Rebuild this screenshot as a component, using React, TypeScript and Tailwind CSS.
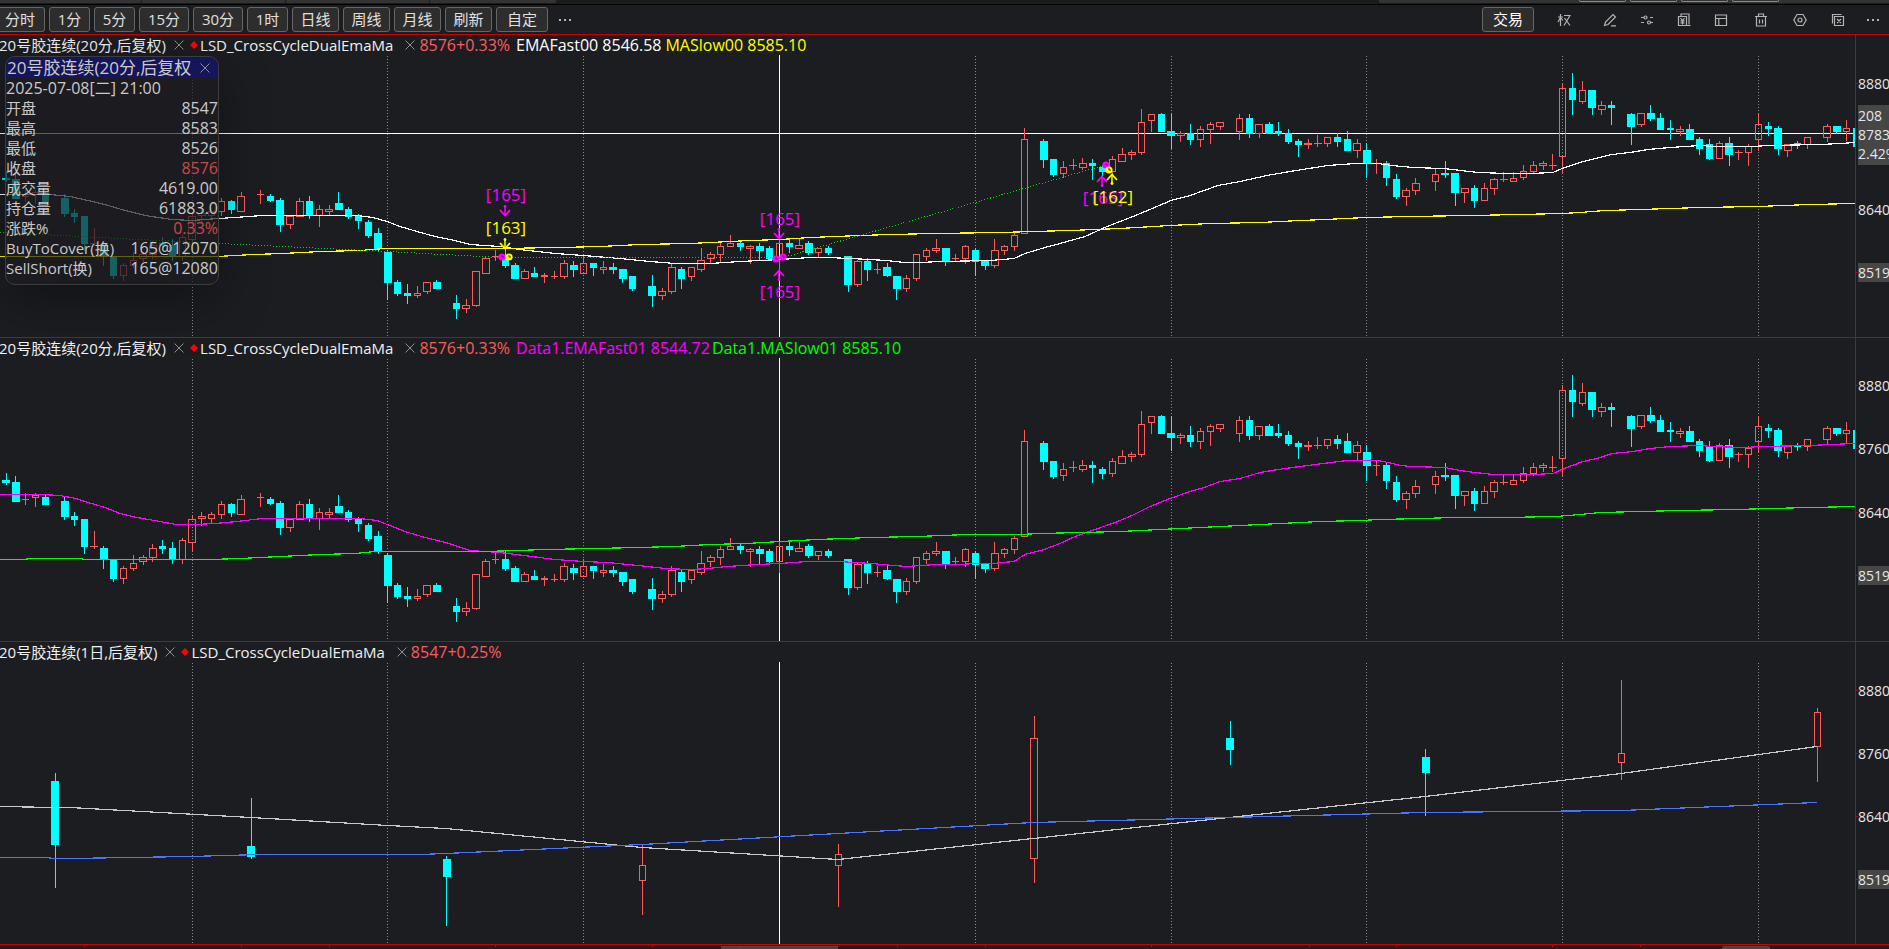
import type { ReactNode } from 'react';

type Candle = [
  index: number,
  kind: 'u' | 'd',
  high: number,
  top: number,
  bottom: number,
  low: number,
];
type Point = [x: number, y: number];

const FONT =
  "font-['Open_Sans','Noto_Sans_CJK_SC',sans-serif]";

const PERIODS = [
  { label: '分时', width: 'w-[45px] rounded-l-none border-l-0 pr-1' },
  { label: '1分', width: 'w-[41px]' },
  { label: '5分', width: 'w-[41px]' },
  { label: '15分', width: 'w-[50px]' },
  { label: '30分', width: 'w-[50px]' },
  { label: '1时', width: 'w-[41px]' },
  { label: '日线', width: 'w-[47px]' },
  { label: '周线', width: 'w-[47px]' },
  { label: '月线', width: 'w-[47px]' },
  { label: '刷新', width: 'w-[47px]' },
  { label: '自定', width: 'w-[52px]' },
];

const QUOTE_ROWS = [
  { label: '开盘', value: '8547' },
  { label: '最高', value: '8583' },
  { label: '最低', value: '8526' },
  { label: '收盘', value: '8576', up: true },
  { label: '成交量', value: '4619.00' },
  { label: '持仓量', value: '61883.0' },
  { label: '涨跌%', value: '0.33%', up: true },
  { label: 'BuyToCover(换)', value: '165@12070' },
  { label: 'SellShort(换)', value: '165@12080' },
];

// 20 minute bars, heights in plot units
const MINUTE_BARS: Candle[] = [
  [0, 'd', 115, 122, 125, 127],
  [1, 'd', 118, 124, 144, 144],
  [2, 'u', 135, 141, 142, 147],
  [3, 'u', 135, 137, 140, 149],
  [4, 'd', 137, 139, 147, 147],
  [6, 'd', 139, 143, 159, 162],
  [7, 'd', 154, 158, 162, 168],
  [8, 'd', 161, 161, 189, 196],
  [9, 'u', 173, 188, 189, 191],
  [10, 'd', 188, 190, 201, 211],
  [11, 'd', 202, 202, 221, 224],
  [12, 'u', 208, 210, 221, 226],
  [13, 'u', 197, 205, 211, 213],
  [14, 'u', 197, 199, 204, 207],
  [15, 'u', 186, 190, 200, 204],
  [16, 'd', 182, 188, 191, 196],
  [17, 'd', 184, 190, 202, 206],
  [18, 'u', 180, 182, 202, 206],
  [19, 'u', 158, 161, 185, 194],
  [20, 'u', 154, 158, 161, 168],
  [21, 'u', 154, 156, 161, 165],
  [22, 'u', 143, 146, 157, 161],
  [23, 'd', 145, 146, 155, 159],
  [24, 'u', 137, 141, 157, 157],
  [26, 'u', 135, 139, 140, 149],
  [27, 'd', 139, 141, 146, 147],
  [28, 'd', 143, 145, 170, 177],
  [29, 'u', 161, 161, 170, 174],
  [30, 'u', 143, 146, 162, 162],
  [31, 'd', 141, 146, 160, 164],
  [32, 'u', 150, 154, 161, 172],
  [33, 'u', 150, 154, 157, 161],
  [34, 'd', 137, 148, 155, 155],
  [35, 'd', 152, 154, 162, 164],
  [36, 'd', 159, 161, 166, 174],
  [37, 'd', 165, 167, 181, 183],
  [38, 'd', 173, 178, 194, 196],
  [39, 'd', 195, 197, 228, 245],
  [40, 'd', 225, 227, 239, 241],
  [41, 'd', 229, 238, 241, 249],
  [42, 'u', 231, 238, 241, 243],
  [43, 'u', 227, 227, 237, 239],
  [44, 'd', 225, 227, 234, 234],
  [46, 'd', 240, 248, 254, 264],
  [47, 'u', 244, 250, 254, 258],
  [48, 'u', 216, 216, 251, 252],
  [49, 'u', 201, 203, 219, 219],
  [50, 'u', 195, 201, 202, 206],
  [51, 'd', 193, 201, 211, 213],
  [52, 'd', 208, 210, 224, 224],
  [53, 'u', 214, 216, 224, 224],
  [54, 'd', 212, 218, 222, 222],
  [55, 'u', 218, 220, 222, 228],
  [56, 'u', 216, 221, 222, 224],
  [57, 'u', 205, 208, 222, 224],
  [58, 'd', 206, 210, 215, 222],
  [59, 'u', 201, 208, 219, 219],
  [60, 'd', 208, 208, 213, 221],
  [61, 'u', 206, 212, 215, 219],
  [62, 'd', 208, 212, 215, 219],
  [63, 'd', 214, 214, 224, 228],
  [64, 'd', 221, 221, 234, 236],
  [66, 'd', 220, 231, 241, 252],
  [67, 'u', 233, 236, 241, 245],
  [68, 'u', 208, 212, 237, 239],
  [69, 'd', 212, 214, 224, 234],
  [70, 'u', 212, 212, 222, 226],
  [71, 'u', 193, 205, 215, 217],
  [72, 'u', 197, 199, 204, 209],
  [73, 'u', 188, 191, 200, 207],
  [74, 'u', 180, 188, 192, 192],
  [75, 'd', 186, 188, 192, 196],
  [76, 'u', 190, 191, 194, 209],
  [77, 'd', 188, 191, 196, 206],
  [78, 'd', 191, 193, 204, 206],
  [79, 'u', 184, 188, 204, 215],
  [80, 'd', 183, 188, 192, 198],
  [81, 'u', 184, 190, 194, 194],
  [82, 'd', 186, 188, 198, 200],
  [83, 'u', 193, 193, 198, 202],
  [84, 'd', 191, 193, 198, 200],
  [86, 'd', 201, 201, 230, 237],
  [87, 'u', 205, 206, 230, 232],
  [88, 'd', 203, 206, 215, 226],
  [89, 'u', 208, 214, 215, 219],
  [90, 'd', 208, 212, 221, 222],
  [91, 'd', 221, 221, 234, 245],
  [92, 'u', 220, 223, 234, 237],
  [93, 'u', 199, 199, 224, 226],
  [94, 'u', 193, 195, 202, 206],
  [95, 'u', 184, 193, 196, 198],
  [96, 'd', 193, 193, 206, 211],
  [97, 'u', 199, 203, 204, 206],
  [98, 'u', 190, 191, 204, 209],
  [99, 'd', 193, 195, 207, 221],
  [100, 'd', 205, 206, 211, 215],
  [101, 'u', 184, 195, 211, 213],
  [102, 'u', 190, 191, 196, 200],
  [103, 'u', 178, 180, 192, 196],
  [104, 'u', 72, 83, 179, 179],
  [106, 'd', 83, 85, 104, 112],
  [107, 'd', 103, 103, 119, 121],
  [108, 'u', 105, 111, 118, 123],
  [109, 'u', 103, 109, 110, 114],
  [110, 'u', 102, 107, 112, 114],
  [111, 'd', 103, 107, 110, 125],
  [112, 'd', 109, 111, 116, 121],
  [113, 'u', 100, 103, 116, 119],
  [114, 'u', 92, 98, 106, 106],
  [115, 'u', 94, 96, 99, 104],
  [116, 'u', 53, 66, 97, 99],
  [117, 'u', 58, 58, 65, 76],
  [118, 'd', 57, 58, 76, 76],
  [119, 'd', 58, 75, 80, 93],
  [120, 'u', 75, 77, 80, 86],
  [121, 'd', 68, 77, 84, 89],
  [122, 'u', 70, 73, 84, 91],
  [123, 'u', 66, 68, 74, 88],
  [124, 'u', 66, 66, 71, 74],
  [126, 'u', 58, 62, 76, 84],
  [127, 'd', 58, 62, 78, 82],
  [128, 'u', 68, 68, 78, 82],
  [129, 'd', 66, 68, 78, 78],
  [130, 'd', 66, 75, 78, 80],
  [131, 'd', 73, 77, 86, 88],
  [132, 'd', 83, 85, 89, 101],
  [133, 'u', 83, 87, 89, 93],
  [134, 'u', 79, 87, 88, 91],
  [135, 'u', 81, 81, 88, 91],
  [136, 'd', 77, 81, 86, 91],
  [137, 'd', 75, 83, 95, 95],
  [138, 'u', 83, 87, 95, 102],
  [139, 'd', 87, 94, 108, 123],
  [140, 'u', 103, 107, 108, 118],
  [141, 'd', 105, 107, 123, 131],
  [142, 'd', 118, 124, 142, 144],
  [143, 'u', 133, 135, 142, 151],
  [144, 'u', 122, 128, 136, 140],
  [146, 'u', 113, 118, 127, 136],
  [147, 'd', 105, 117, 119, 123],
  [148, 'd', 117, 117, 138, 151],
  [149, 'u', 133, 133, 138, 148],
  [150, 'd', 130, 133, 146, 153],
  [151, 'u', 128, 133, 146, 146],
  [152, 'u', 122, 124, 134, 140],
  [153, 'u', 116, 124, 125, 127],
  [154, 'u', 116, 122, 127, 127],
  [155, 'u', 109, 115, 123, 125],
  [156, 'u', 105, 109, 116, 118],
  [157, 'u', 105, 107, 110, 114],
  [158, 'u', 98, 109, 110, 114],
  [159, 'u', 27, 32, 101, 118],
  [160, 'd', 17, 32, 44, 59],
  [161, 'u', 25, 34, 46, 48],
  [162, 'd', 34, 34, 52, 59],
  [163, 'u', 45, 49, 54, 59],
  [164, 'd', 45, 49, 52, 69],
  [166, 'd', 57, 58, 71, 89],
  [167, 'u', 57, 57, 69, 71],
  [168, 'd', 49, 57, 63, 65],
  [169, 'd', 57, 62, 74, 74],
  [170, 'd', 64, 72, 74, 84],
  [171, 'u', 70, 73, 76, 80],
  [172, 'd', 68, 73, 84, 84],
  [173, 'd', 81, 83, 93, 99],
  [174, 'd', 83, 88, 103, 104],
  [175, 'u', 85, 87, 103, 103],
  [176, 'd', 81, 87, 99, 110],
  [177, 'u', 94, 96, 97, 104],
  [178, 'u', 88, 90, 97, 110],
  [179, 'u', 58, 68, 84, 95],
  [180, 'd', 66, 70, 73, 80],
  [181, 'd', 70, 72, 93, 99],
  [182, 'u', 88, 88, 95, 101],
  [183, 'd', 85, 87, 89, 93],
  [184, 'u', 81, 81, 89, 93],
  [186, 'u', 68, 70, 82, 86],
  [187, 'd', 70, 70, 76, 78],
  [188, 'u', 64, 72, 76, 85],
  [189, 'd', 72, 72, 91, 91],
];

const DAY_BARS: Candle[] = [
  [0, 'd', 111, 119, 183, 226],
  [1, 'd', 136, 184, 195, 197],
  [2, 'd', 194, 197, 215, 264],
  [3, 'u', 182, 203, 219, 253],
  [4, 'u', 182, 192, 204, 245],
  [5, 'u', 54, 76, 197, 221],
  [6, 'd', 59, 76, 88, 103],
  [7, 'd', 87, 95, 111, 154],
  [8, 'u', 18, 91, 101, 118],
  [9, 'u', 46, 50, 85, 120],
];

const EMA_00: Point[] = [
  [0, 139], [50, 139], [70, 141], [88, 145], [105, 149], [125, 155],
  [145, 160], [172, 164], [192, 165], [218, 163], [235, 162], [262, 160],
  [310, 160], [357, 160], [373, 162], [387, 166], [400, 171], [417, 176],
  [435, 181], [455, 185], [470, 189], [500, 191], [520, 194], [555, 198],
  [583, 200], [620, 203], [650, 206], [675, 208], [710, 208], [740, 206],
  [780, 204], [810, 202], [828, 202], [850, 203], [870, 204], [886, 205],
  [905, 207], [920, 207], [940, 206], [990, 205], [1014, 203], [1025, 198],
  [1045, 192], [1060, 188], [1085, 181], [1107, 171], [1133, 161], [1157, 151],
  [1171, 145], [1190, 140], [1218, 130], [1240, 126], [1267, 120], [1290, 116],
  [1328, 110], [1356, 108], [1378, 108], [1392, 110], [1413, 112], [1443, 113],
  [1461, 115], [1478, 117], [1507, 118], [1530, 118], [1553, 117], [1562, 113],
  [1580, 107], [1599, 102], [1612, 99], [1630, 97], [1648, 94], [1670, 92],
  [1700, 90], [1715, 91], [1750, 91], [1770, 90], [1820, 89], [1840, 88],
  [1855, 87],
];

const SLOW_00: Point[] = [
  [0, 201], [217, 201], [253, 199], [283, 198], [320, 196], [360, 195],
  [385, 193], [500, 193], [560, 192], [600, 191], [640, 189], [690, 188],
  [750, 185], [780, 184], [810, 182], [860, 180], [890, 179], [935, 178],
  [1000, 177], [1033, 176], [1070, 175], [1120, 173], [1170, 170], [1210, 168],
  [1260, 167], [1300, 165], [1325, 164], [1366, 162], [1410, 161], [1470, 160],
  [1520, 159], [1562, 158], [1580, 157], [1605, 155], [1640, 154], [1700, 152],
  [1758, 151], [1810, 149], [1855, 148],
];

const EMA_01: Point[] = [
  [0, 136], [42, 136], [60, 137], [76, 140], [88, 144], [105, 149],
  [120, 155], [137, 159], [160, 163], [176, 166], [196, 166], [215, 165],
  [237, 163], [262, 160], [310, 160], [360, 160], [377, 162], [390, 167],
  [405, 173], [425, 179], [446, 184], [458, 188], [470, 192], [500, 194],
  [524, 197], [555, 201], [583, 203], [608, 204], [638, 207], [665, 210],
  [690, 211], [708, 210], [727, 208], [757, 206], [779, 205], [808, 203],
  [838, 203], [855, 204], [872, 205], [893, 207], [907, 208], [921, 207],
  [936, 206], [960, 206], [975, 205], [994, 205], [1003, 204], [1014, 203],
  [1025, 196], [1044, 191], [1060, 185], [1075, 178], [1095, 171], [1115, 164],
  [1132, 157], [1150, 148], [1170, 140], [1190, 133], [1204, 129], [1220, 123],
  [1240, 120], [1260, 114], [1278, 111], [1300, 108], [1323, 105], [1347, 102],
  [1378, 102], [1388, 104], [1400, 107], [1412, 108], [1445, 109], [1460, 112],
  [1475, 114], [1493, 116], [1533, 116], [1553, 115], [1562, 111], [1572, 107],
  [1583, 103], [1597, 100], [1612, 95], [1633, 93], [1650, 90], [1670, 88],
  [1700, 87], [1712, 88], [1745, 89], [1760, 88], [1810, 87], [1830, 86],
  [1855, 85],
];

const SLOW_01: Point[] = [
  [0, 201], [24, 201], [30, 200], [80, 200], [84, 201], [210, 201],
  [240, 200], [280, 198], [320, 196], [355, 195], [375, 193], [485, 193],
  [517, 192], [545, 191], [596, 190], [638, 189], [674, 188], [710, 186],
  [746, 185], [781, 183], [817, 181], [871, 179], [917, 178], [967, 176],
  [1020, 176], [1040, 175], [1080, 174], [1120, 173], [1160, 171], [1200, 169],
  [1240, 167], [1280, 165], [1320, 163], [1360, 162], [1380, 161], [1420, 160],
  [1455, 159], [1505, 159], [1556, 158], [1580, 156], [1600, 154], [1640, 153],
  [1680, 152], [1735, 151], [1770, 150], [1810, 149], [1855, 148],
];

const DAY_FAST: Point[] = [
  [0, 144], [55, 145], [70, 145], [251, 155], [388, 163], [446, 166],
  [642, 185], [838, 197], [1033, 176], [1229, 155], [1425, 134], [1621, 111],
  [1817, 84],
];

const DAY_SLOW: Point[] = [
  [0, 195], [45, 195], [55, 196], [70, 196], [130, 195], [190, 194],
  [260, 192], [420, 192], [446, 191], [642, 182], [838, 171], [1033, 160],
  [1229, 155], [1425, 150], [1621, 148], [1817, 140],
];

const GRID_X = [192, 387, 583, 779, 975, 1171, 1366, 1562, 1758];
const CROSS_X = 779;

const toPoints = (points: Point[]) =>
  points.map(([x, y]) => `${x},${y}`).join(' ');

// the first pane shares its bars with the second, on a slightly tighter scale
const tighten = (bars: Candle[]): Candle[] =>
  bars.map(([index, kind, ...levels]) => {
    const [high, top, bottom, low] = levels.map((y) =>
      Math.round(28.3 + ((y - 27.3) * 189) / 190)
    );
    return [index, kind, high, top, Math.max(bottom, top + 1), low];
  });

const Candles = ({
  bars,
  start,
  step,
}: {
  bars: Candle[];
  start: number;
  step: number;
}) => (
  <g shapeRendering="crispEdges">
    {bars.map(([index, kind, high, top, bottom, low]) => {
      const center = start + index * step;
      const x = Math.floor(center);
      const left = Math.floor(center - 3.25);
      const width = Math.floor(center + 4.2) - left;
      const height = bottom - top;

      if (kind === 'd') {
        return (
          <g key={index} fill="#00ffff">
            <rect x={x} y={high} width={1} height={low - high} />
            <rect x={left} y={top} width={width} height={height} />
          </g>
        );
      }

      return (
        <g key={index} fill="#ff5b5b">
          <rect x={x} y={high} width={1} height={top - high} />
          <rect x={x} y={bottom} width={1} height={Math.max(low - bottom, 0)} />
          {height <= 2 ? (
            <rect x={left} y={top} width={width} height={height} />
          ) : (
            <rect
              x={left + 0.5}
              y={top + 0.5}
              width={width - 1}
              height={height - 1}
              fill="none"
              stroke="#ff5b5b"
            />
          )}
        </g>
      );
    })}
  </g>
);

const Line = ({ points, color }: { points: Point[]; color: string }) => (
  <polyline
    points={toPoints(points)}
    transform="translate(0 0.5)"
    fill="none"
    stroke={color}
    strokeWidth={1.2}
    shapeRendering="crispEdges"
  />
);

const Plot = ({
  height,
  label,
  children,
}: {
  height: number;
  label: string;
  children: ReactNode;
}) => (
  <svg
    role="img"
    aria-label={label}
    className="block w-full"
    height={height}
  >
    <g shapeRendering="crispEdges">
      {GRID_X.filter((x) => x !== CROSS_X).map((x) => (
        <line
          key={x}
          x1={x + 0.5}
          x2={x + 0.5}
          y1={1}
          y2={height}
          stroke="#8c8c8c"
          strokeDasharray="1 2"
        />
      ))}
      <rect x={CROSS_X} y={0} width={1} height={height} fill="#ffffff" />
    </g>
    {children}
  </svg>
);

const Arrow = ({
  x,
  y,
  color,
  down = false,
}: {
  x: number;
  y: number;
  color: string;
  down?: boolean;
}) => (
  <g
    transform={`translate(${x} ${y}) scale(1 ${down ? -1 : 1})`}
    stroke={color}
    fill="none"
  >
    <path d="M0 -4V5" strokeWidth={1.5} />
    <path d="M-5 1L0 -4.5L5 1" strokeWidth={1.8} />
    <circle cy={4.5} r={1} fill={color} />
  </g>
);

const Dot = ({ x, y, color }: { x: number; y: number; color: string }) => (
  <g>
    <circle cx={x} cy={y} r={3.6} fill={color} />
    <path d={`M${x - 1} ${y - 1}h2v2`} stroke="#3d3d3d" fill="none" />
  </g>
);

const Mark = ({
  x,
  y,
  color,
  children,
}: {
  x: number;
  y: number;
  color: string;
  children: string;
}) => (
  <text x={x} y={y} fill={color} textAnchor="middle" className="text-[17px]">
    {children}
  </text>
);

const PriceAxis = ({
  height,
  ticks,
  children,
}: {
  height: number;
  ticks: { y: number; label: string; boxed?: boolean }[];
  children?: ReactNode;
}) => (
  <svg
    width={33}
    height={height}
    className="block text-[14px]"
    role="img"
    aria-label="价格轴"
  >
    {ticks.map((tick) => (
      <g key={tick.y}>
        {tick.boxed && (
          <rect x={2} y={tick.y - 9} width={31} height={19} fill="#464646" />
        )}
        <rect x={0} y={tick.y} width={2} height={1} fill="#c80000" />
        <text x={2} y={tick.y + 6} fill="#e6e6e6">
          {tick.label}
        </text>
      </g>
    ))}
    {children}
  </svg>
);

const CloseMark = ({ label }: { label: string }) => (
  <button type="button" aria-label={label} className="block">
    <svg width="10" height="10" viewBox="0 0 10 10" stroke="#8f8f8f">
      <path d="M0.5 0.5L9.5 9.5M9.5 0.5L0.5 9.5" />
    </svg>
  </button>
);

const PaneHeader = ({
  title,
  change,
  children,
}: {
  title: string;
  change: string;
  children?: ReactNode;
}) => (
  <header className="flex h-5 items-center overflow-hidden whitespace-nowrap text-[16px] leading-5 text-[#f0f0f0]">
    <h2 className="-ml-px text-[15px]">{title}</h2>
    <div className="ml-2 flex items-center gap-1.5">
      <CloseMark label="关闭合约" />
      <svg width="8" height="8" viewBox="0 0 8 8" fill="#ff0000">
        <path d="M4 0L8 4L4 8L0 4Z" />
      </svg>
    </div>
    <span className="ml-0.5 mr-3 text-[15px]">LSD_CrossCycleDualEmaMa</span>
    <CloseMark label="关闭策略" />
    <span className="ml-1 text-[#ff5b5b]">{change}</span>
    {children}
  </header>
);

const QuotePanel = () => (
  <aside className="absolute left-[5px] top-[21px] w-[214px] overflow-hidden rounded-[10px] border border-[#3c3d41] bg-[#1c1d21]/70 pb-1.5 text-[15px] text-[#cacaca] shadow-[0_16px_50px_rgba(0,0,0,0.35)]">
    <div className="flex h-[21px] items-center justify-between bg-[#15155a] pl-px pr-2">
      <h3 className="w-[187px] overflow-hidden whitespace-nowrap text-[17px] leading-[21px]">
        20号胶连续(20分,后复权
      </h3>
      <CloseMark label="关闭窗口" />
    </div>
    <table className="w-full">
      <caption className="h-5 text-left text-[16px] leading-5">
        2025-07-08[二] 21:00
      </caption>
      <tbody>
        {QUOTE_ROWS.map((row) => (
          <tr key={row.label} className="h-5 leading-5">
            <th scope="row" className="p-0 text-left font-normal">
              {row.label}
            </th>
            <td
              className={
                row.up
                  ? 'p-0 text-right text-[16px] leading-5 text-[#c94a4a]'
                  : 'p-0 text-right text-[16px] leading-5'
              }
            >
              {row.value}
            </td>
          </tr>
        ))}
      </tbody>
    </table>
  </aside>
);

const ToolIcon = ({ children }: { children: ReactNode }) => (
  <svg
    width="14"
    height="14"
    viewBox="0 0 14 14"
    fill="none"
    stroke="#b4b4b4"
    strokeWidth="1.2"
  >
    {children}
  </svg>
);

const MORE_DOTS = (
  <g fill="#b4b4b4" stroke="none">
    <rect x="1" y="6" width="2" height="2" />
    <rect x="6" y="6" width="2" height="2" />
    <rect x="11" y="6" width="2" height="2" />
  </g>
);

const TOOLS = [
  {
    label: '复权',
    width: 'w-[55px]',
    icon: (
      <path d="M3.5 1v12M1 4h5M3.5 4.5L1 9M4 5l2 2.5M7 2.5h6L7 12.5M7.5 5l5.5 7.5" />
    ),
  },
  {
    label: '画线',
    width: 'w-[37px]',
    icon: <path d="M1.5 12.5L2.5 9L10 1.5L12.5 4L5 11.5ZM8 12.8h5" />,
  },
  {
    label: '参数',
    width: 'w-[37px]',
    icon: (
      <>
        <path d="M1 4.5h6M10 4.5h3M1 9.5h3M7 9.5h6" transform="scale(1 1)" />
        <circle cx="5.5" cy="4.5" r="1.5" fill="#1c1d21" />
        <circle cx="9" cy="9.5" r="1.5" fill="#1c1d21" />
      </>
    ),
  },
  {
    label: '账户',
    width: 'w-[37px]',
    icon: (
      <path d="M1.5 3.5h8v9h-8zM4 3.5v-2.5h8v10.5M9.5 12.5h4M3.5 5l2 2.5l2 -2.5M5.5 7.5v4M3.5 7.8h4M3.5 9.8h4" />
    ),
  },
  {
    label: '布局',
    width: 'w-[37px]',
    icon: <path d="M1.5 2h11v10.5h-11zM1.5 5.5h11M4.8 5.5v7" />,
  },
  {
    label: '删除',
    width: 'w-[43px]',
    icon: (
      <path d="M1 3.5h12M4.5 3.5v-2.5h5v2.5M2.5 3.5v9.5h9v-9.5M5.5 6.5v4M8.5 6.5v4" />
    ),
  },
  {
    label: '设置',
    width: 'w-9',
    icon: (
      <>
        <path d="M4 1.5h6L13.2 7L10 12.5H4L0.8 7Z" />
        <circle cx="7" cy="7" r="2" />
      </>
    ),
  },
  {
    label: '关闭全部',
    width: 'w-[39px]',
    icon: <path d="M3.5 3.5h9v9h-9zM1.5 10.5v-9h9M6 6l4 4M10 6l-4 4" />,
  },
  { label: '更多', width: 'w-8', icon: MORE_DOTS },
];

const Toolbar = () => (
  <nav className="flex h-[30px] items-center border-t border-black text-[15px] text-[#e0e0e0]">
    <div className="flex gap-1">
      {PERIODS.map((period) => (
        <button
          key={period.label}
          type="button"
          className={`h-[25px] whitespace-nowrap rounded-[3px] border border-[#666666] bg-[#2d2d2d] leading-[23px] ${period.width}`}
        >
          {period.label}
        </button>
      ))}
    </div>
    <button type="button" aria-label="更多周期" className="ml-2.5 block">
      <ToolIcon>{MORE_DOTS}</ToolIcon>
    </button>
    <div className="ml-auto flex items-center">
      <button
        type="button"
        className="mr-0.5 h-[25px] w-[52px] rounded-[3px] border border-[#666666] bg-[#2d2d2d] leading-[23px] text-white"
      >
        交易
      </button>
      {TOOLS.map((tool) => (
        <button
          key={tool.label}
          type="button"
          aria-label={tool.label}
          className={`flex h-6 items-center justify-center ${tool.width}`}
        >
          <ToolIcon>{tool.icon}</ToolIcon>
        </button>
      ))}
    </div>
  </nav>
);

const Pane = ({ axis, children }: { axis: ReactNode; children: ReactNode }) => (
  <section className="relative flex border-t border-[#c80000]">
    <div className="min-w-0 flex-1">{children}</div>
    <div className="border-l border-[#c80000]">{axis}</div>
  </section>
);

const TAB_EDGE =
  'h-0.5 w-[47px] rounded-b-sm border border-t-0 border-[#8a8a8a]';

const TIME_TICKS = [
  84, 241, 329, 495, 652, 740, 897, 985, 1151, 1309, 1396, 1552, 1640,
];

const App = () => (
  <div
    className={`min-h-screen overflow-hidden bg-[#1c1d21] text-[#e6e6e6] ${FONT}`}
  >
    <div className="flex h-1 justify-between bg-[#1b1b1b]">
      <div className="flex h-[3px] bg-[#333333]">
        <div className="w-[142px] border-r border-[#1b1b1b]" />
        <div className="w-36 border-r border-[#1b1b1b]" />
        <div className="w-36 border-r border-[#1b1b1b]" />
        <div className="w-[126px]" />
      </div>
      <div className="flex h-[3px] gap-1 bg-[#333333] pl-50 pr-[110px]">
        <div className={TAB_EDGE} />
        <div className={TAB_EDGE} />
        <div className={TAB_EDGE} />
        <div className={TAB_EDGE} />
      </div>
    </div>
    <Toolbar />

    <main>
      <Pane
        axis={
          <PriceAxis
            height={302}
            ticks={[
              { y: 48, label: '8880' },
              { y: 174, label: '8640' },
              { y: 237, label: '8519', boxed: true },
            ]}
          >
            <rect x={2} y={70} width={31} height={60} fill="#464646" />
            <g fill="#e6e6e6">
              <text x={2} y={86}>
                208
              </text>
              <text x={2} y={105}>
                8783
              </text>
              <text x={2} y={124}>
                2.42%
              </text>
            </g>
          </PriceAxis>
        }
      >
        <PaneHeader title="20号胶连续(20分,后复权)" change="8576+0.33%">
          <span className="ml-1.5 text-white">EMAFast00 8546.58</span>
          <span className="ml-1 text-[#ffff00]">MASlow00 8585.10</span>
        </PaneHeader>
        <Plot height={282} label="20分钟K线">
          <rect
            x={0}
            y={78}
            width="100%"
            height={1}
            fill="#ffffff"
            shapeRendering="crispEdges"
          />
          <Candles bars={tighten(MINUTE_BARS)} start={6.1} step={9.79} />
          <Line points={EMA_00} color="#ffffff" />
          <Line points={SLOW_00} color="#ffff00" />
          <polyline
            points="0,177 218,188 387,196 500,202 783,202 1104,110"
            transform="translate(0 0.5)"
            fill="none"
            stroke="#00dc00"
            strokeDasharray="1 2"
            shapeRendering="crispEdges"
          />
          <Dot x={502} y={202} color="#ff00ff" />
          <Dot x={509} y={202} color="#ffff00" />
          <Dot x={776} y={204} color="#ff00ff" />
          <Dot x={783} y={202} color="#ff00ff" />
          <Dot x={1106} y={110} color="#ff00ff" />
          <Dot x={1109} y={115} color="#ffff00" />
          <Arrow x={505} y={156} color="#ff00ff" down />
          <Arrow x={505} y={189} color="#ffff00" down />
          <Arrow x={779} y={179} color="#ff00ff" down />
          <Arrow x={779} y={220} color="#ff00ff" />
          <Arrow x={1102} y={126} color="#ff00ff" />
          <Arrow x={1112} y={124} color="#ffff00" />
          <Mark x={506} y={146} color="#ff00ff">[165]</Mark>
          <Mark x={506} y={179} color="#ffff00">[163]</Mark>
          <Mark x={780} y={170} color="#ff00ff">[165]</Mark>
          <Mark x={780} y={243} color="#ff00ff">[165]</Mark>
          <Mark x={1103} y={149} color="#ff00ff">[165]</Mark>
          <Mark x={1113} y={148} color="#ffff00">[162]</Mark>
        </Plot>
        <QuotePanel />
      </Pane>

      <Pane
        axis={
          <PriceAxis
            height={303}
            ticks={[
              { y: 47, label: '8880' },
              { y: 110, label: '8760' },
              { y: 174, label: '8640' },
              { y: 237, label: '8519', boxed: true },
            ]}
          />
        }
      >
        <PaneHeader title="20号胶连续(20分,后复权)" change="8576+0.33%">
          <span className="ml-1.5 text-[#ff00ff]">
            Data1.EMAFast01 8544.72
          </span>
          <span className="ml-0.5 text-[#00ff00]">Data1.MASlow01 8585.10</span>
        </PaneHeader>
        <Plot height={283} label="20分钟K线副图">
          <Candles bars={MINUTE_BARS} start={6.1} step={9.79} />
          <Line points={EMA_01} color="#ff00ff" />
          <Line points={SLOW_01} color="#00ff00" />
        </Plot>
      </Pane>

      <Pane
        axis={
          <PriceAxis
            height={302}
            ticks={[
              { y: 48, label: '8880' },
              { y: 111, label: '8760' },
              { y: 174, label: '8640' },
              { y: 237, label: '8519', boxed: true },
            ]}
          />
        }
      >
        <PaneHeader title="20号胶连续(1日,后复权)" change="8547+0.25%" />
        <Plot height={282} label="日K线">
          <Candles bars={DAY_BARS} start={55.2} step={195.8} />
          <Line points={DAY_FAST} color="#c8c8c8" />
          <Line points={DAY_SLOW} color="#4a74ff" />
        </Plot>
      </Pane>
    </main>

    <footer className="border-t border-[#c80000]">
      <svg
        className="block w-full"
        height="4"
        shapeRendering="crispEdges"
        aria-hidden="true"
      >
        {TIME_TICKS.map((x) => (
          <rect key={x} x={x} y={0} width={1} height={2} fill="#c80000" />
        ))}
        <rect x={721} y={1} width={117} height={3} fill="#464646" />
        <rect x={1722} y={1} width={48} height={6} rx={3} fill="#464646" />
      </svg>
    </footer>
  </div>
);

export default App;
